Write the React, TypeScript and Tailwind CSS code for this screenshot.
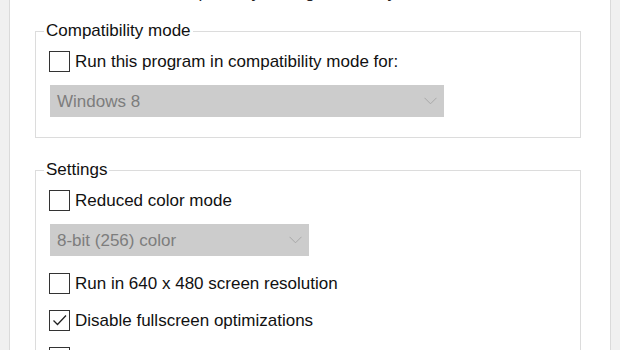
import React from 'react';

const font = { fontFamily: '"Liberation Sans", Arial, sans-serif' };

const Checkbox = ({ checked = false }: { checked?: boolean }) => (
  <span className="flex h-[21px] w-[21px] shrink-0 items-center justify-center border border-[#333333] bg-white">
    {checked && (
      <svg width="17" height="17" viewBox="0 0 17 17" fill="none">
        <path d="M2.5 8.5 L6.5 12.5 L15 3.5" stroke="#222222" strokeWidth="1.3" />
      </svg>
    )}
  </span>
);

const CheckRow = ({ label, checked }: { label: string; checked?: boolean }) => (
  <div className="flex h-[21px] items-center gap-[5px] text-[17px] leading-[21px] text-[#111111]">
    <Checkbox checked={checked} />
    <span>{label}</span>
  </div>
);

const Select = ({ value, width }: { value: string; width: string }) => (
  <div className={`flex h-[32px] items-center justify-between bg-[#cccccc] pl-[7px] pr-[7px] ${width}`}>
    <span className="text-[17px] leading-[21px] text-[#7d7d7d]">{value}</span>
    <svg width="13" height="8" viewBox="0 0 13 8" fill="none">
      <path d="M0.5 0.8 L6.5 6.8 L12.5 0.8" stroke="#a8a8a8" strokeWidth="1" />
    </svg>
  </div>
);

export default function App() {
  return (
    <div className="h-[350px] w-[620px] overflow-hidden bg-[#f0f0f0] px-[9px]" style={font}>
      <div className="h-[400px] border-x border-[#dadada] bg-white pl-[25px] pr-[29px]">
        <div className="-mt-[18px] h-[21px] text-[17px] leading-[21px] text-[#222222] underline">
          How do I choose compatibility settings manually?
        </div>

        <fieldset className="mt-[18px] border border-[#dcdcdc] pb-[20px]">
          <legend className="ml-[8px] px-[2px] text-[17px] leading-[20px] text-[#111111]">Compatibility mode</legend>
          <div className="px-[13px]">
            <div className="mt-[10px]">
              <CheckRow label="Run this program in compatibility mode for:" />
            </div>
            <div className="mt-[13px] pl-[1px]">
              <Select value="Windows 8" width="w-[394px]" />
            </div>
          </div>
        </fieldset>

        <fieldset className="mt-[22px] border border-[#dcdcdc] pb-[20px]">
          <legend className="ml-[8px] px-[2px] text-[17px] leading-[20px] text-[#111111]">Settings</legend>
          <div className="px-[13px]">
            <div className="mt-[10px]">
              <CheckRow label="Reduced color mode" />
            </div>
            <div className="mt-[13px] pl-[1px]">
              <Select value="8-bit (256) color" width="w-[259px]" />
            </div>
            <div className="mt-[17px] flex flex-col gap-[16px]">
              <CheckRow label="Run in 640 x 480 screen resolution" />
              <CheckRow label="Disable fullscreen optimizations" checked />
              <CheckRow label="Run this program as an administrator" />
            </div>
          </div>
        </fieldset>
      </div>
    </div>
  );
}
